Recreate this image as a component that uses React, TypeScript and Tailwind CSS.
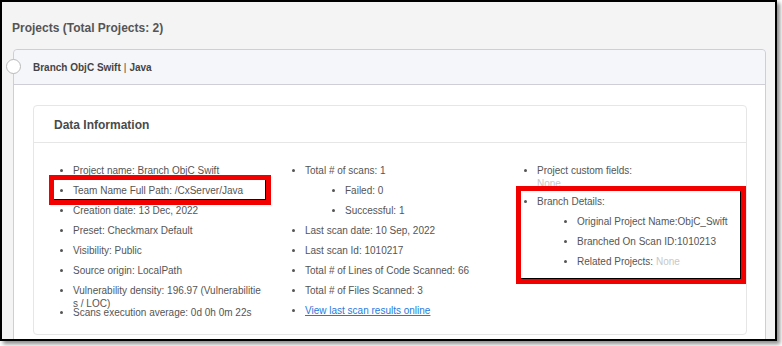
import React from "react";

const Li = ({ children, className = "" }: { children: React.ReactNode; className?: string }) => (
  <li className={`leading-[13px] mb-[7px] ${className}`}>{children}</li>
);

export default function App() {
  return (
    <div className="w-[782px] h-[346px] bg-white relative font-['Liberation_Sans',Arial,sans-serif]">
      <div className="w-[777px] h-[341px] border-2 border-black overflow-hidden bg-[#f4f4f4] shadow-[3px_3px_4px_rgba(0,0,0,0.45)]">
        <div className="pl-[10px] pt-[19px] pb-[14px] text-[12px] leading-[14px] font-bold text-[#555]">
          Projects (Total Projects: 2)
        </div>
        <div className="relative ml-[11px] mr-[9px] border border-[#cfcdd6] rounded-t-[4px]">
          <div className="absolute left-[-8px] top-[9px] w-[15px] h-[15px] rounded-full bg-white border border-[#b9b9b9]" />
          <div className="h-[35px] flex items-center pl-[19px] pt-[1px] bg-[#f5f6fa] border-b border-[#cfcdd6] rounded-t-[4px] text-[10px] font-bold text-[#444]">
            Branch ObjC Swift <span className="mx-[3px] font-normal">|</span> Java
          </div>
          <div className="bg-white pl-[19px] pr-[18px] pt-[20px] pb-[20px]">
            <div className="border border-[#e6e6e6] rounded-[4px] bg-white">
              <div className="h-[37px] flex items-center pl-[20px] pt-[1px] border-b border-[#e6e6e6] text-[12px] font-bold text-[#4a4a4a]">
                Data Information
              </div>
              <div className="grid grid-cols-[232px_232px_1fr] pt-[21px] pb-[8px] text-[10px] text-[#555]">
                <ul className="list-disc pl-[39px]">
                  <Li>Project name: Branch ObjC Swift</Li>
                  <Li>Team Name Full Path: /CxServer/Java</Li>
                  <Li>Creation date: 13 Dec, 2022</Li>
                  <Li>Preset: Checkmarx Default</Li>
                  <Li>Visibility: Public</Li>
                  <Li>Source origin: LocalPath</Li>
                  <Li className="h-[15px] w-[190px] break-all">Vulnerability density: 196.97 (Vulnerabilities / LOC)</Li>
                  <Li>Scans execution average: 0d 0h 0m 22s</Li>
                </ul>
                <ul className="list-disc pl-[39px]">
                  <Li>
                    Total # of scans: 1
                    <ul className="list-disc pl-[40px] mt-[7px]">
                      <Li>Failed: 0</Li>
                      <Li className="!mb-0">Successful: 1</Li>
                    </ul>
                  </Li>
                  <Li>Last scan date: 10 Sep, 2022</Li>
                  <Li>Last scan Id: 1010217</Li>
                  <Li>Total # of Lines of Code Scanned: 66</Li>
                  <Li>Total # of Files Scanned: 3</Li>
                  <Li>
                    <a href="#" className="text-[#1f7ae0] underline">View last scan results online</a>
                  </Li>
                </ul>
                <ul className="list-disc pl-[39px]">
                  <Li className="h-[24px]">
                    Project custom fields:
                    <div className="text-[#c8c8c8]">None</div>
                  </Li>
                  <Li>
                    Branch Details:
                    <ul className="list-disc pl-[40px] mt-[7px]">
                      <Li>Original Project Name:ObjC_Swift</Li>
                      <Li>Branched On Scan ID:1010213</Li>
                      <Li className="!mb-0">
                        Related Projects: <span className="text-[#c8c8c8]">None</span>
                      </Li>
                    </ul>
                  </Li>
                </ul>
              </div>
            </div>
          </div>
        </div>
      </div>
      <div className="absolute left-[49px] top-[175px] w-[222px] h-[30px] border-[5px] border-[#f20000] shadow-[inset_-1px_-1px_0_#000]" />
      <div className="absolute left-[516px] top-[186px] w-[230px] h-[98px] border-[5px] border-[#f20000] shadow-[inset_-1px_-1px_0_#000]" />
    </div>
  );
}
